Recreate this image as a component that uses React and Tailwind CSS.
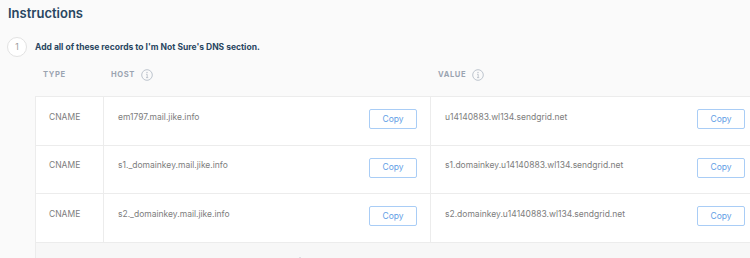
import React from "react";

const Info = () => (
  <svg width="12" height="12" viewBox="0 0 12 12" className="ml-[6px] shrink-0">
    <circle cx="6" cy="6" r="5.3" fill="none" stroke="#b7bec8" strokeWidth="0.9" />
    <circle cx="6" cy="3.5" r="0.65" fill="#b7bec8" />
    <path d="M5.1 5.3h1.1v3.3M5 8.6h2.2" stroke="#b7bec8" strokeWidth="0.85" fill="none" />
  </svg>
);

const CopyBtn = () => (
  <button className="w-[48px] h-[20px] shrink-0 border border-[#a9cdf6] rounded-[2px] bg-white text-[8.5px] leading-none text-[#629ee6] flex items-center justify-center">
    Copy
  </button>
);

const rows = [
  ["CNAME", "em1797.mail.jike.info", "u14140883.wl134.sendgrid.net"],
  ["CNAME", "s1._domainkey.mail.jike.info", "s1.domainkey.u14140883.wl134.sendgrid.net"],
  ["CNAME", "s2._domainkey.mail.jike.info", "s2.domainkey.u14140883.wl134.sendgrid.net"],
];

export default function App() {
  return (
    <div className="w-[750px] h-[258px] overflow-hidden bg-[#fafafa] font-['Inter',sans-serif]">
      <h2 className="pt-[4.5px] pl-[8px] text-[13px] leading-[16px] font-semibold text-[#294661]">
        Instructions
      </h2>
      <div className="mt-[16.5px] flex items-center pl-[7px]">
        <div className="w-[20px] h-[20px] rounded-full border border-[#e2e2e2] bg-white flex items-center justify-center text-[8.5px] text-[#9b9b9b]">
          1
        </div>
        <p className="ml-[8px] -mt-[1px] text-[8.5px] leading-[12px] font-bold text-[#294661]">
          Add all of these records to I'm Not Sure's DNS section.
        </p>
      </div>
      <div className="ml-[35px] w-[722px]">
        <div className="mt-[11.5px] grid grid-cols-[68px_327px_327px] h-[12px] items-center text-[7.6px] font-bold tracking-[0.08em] text-[#9aa4b1]">
          <div className="pl-[8px]">TYPE</div>
          <div className="pl-[8px] flex items-center">
            HOST <Info />
          </div>
          <div className="pl-[8px] flex items-center">
            VALUE <Info />
          </div>
        </div>
        <div className="mt-[15.5px] border-t border-l border-[#ececec]">
          {rows.map((r, i) => (
            <div
              key={i}
              className="grid grid-cols-[68px_327px_327px] h-[48.5px] border-b border-[#ececec] bg-white text-[8.5px] leading-[12px] text-[#7d7d7d]"
            >
              <div className="border-r border-[#ececec] pl-[13px] pt-[13.5px]">{r[0]}</div>
              <div className="border-r border-[#ececec] pl-[14px] pr-[13px] pt-[12px] flex justify-between items-start">
                <span className="mt-[1.5px]">{r[1]}</span>
                <CopyBtn />
              </div>
              <div className="pl-[14px] pr-[13px] pt-[12px] flex justify-between items-start">
                <span className="mt-[1.5px]">{r[2]}</span>
                <CopyBtn />
              </div>
            </div>
          ))}
          <div className="h-[40px] bg-[#f7f7f7] flex items-start justify-center pt-[14px] pr-[40px] gap-[10px] text-[9px] text-[#9aa4b1]">
            <svg width="10" height="10" viewBox="0 0 10 10">
              <circle cx="5" cy="5" r="4" fill="none" stroke="#aab2bd" strokeWidth="1" />
            </svg>
            <span>Send these records to a coworker</span>
          </div>
        </div>
      </div>
    </div>
  );
}
